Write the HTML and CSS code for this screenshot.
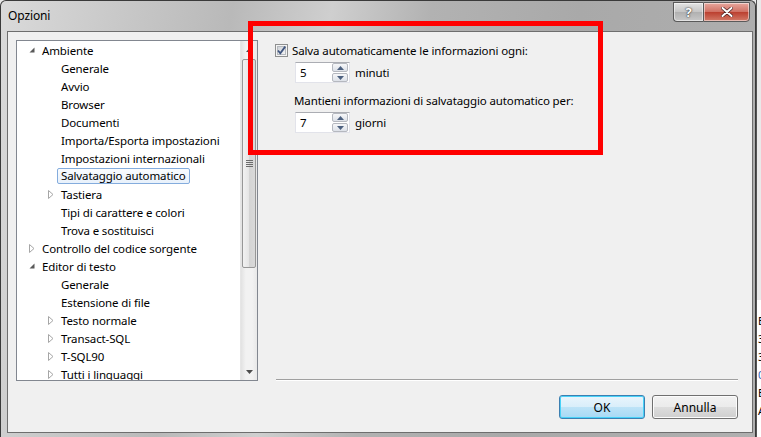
FILE: index.html
```html
<!DOCTYPE html>
<html lang="it">
<head>
    <meta charset="UTF-8">
    <title>Opzioni</title>
    <link rel="stylesheet" href="styles.css">
</head>
<body>

<div class="window">
    <!-- Barra del titolo -->
    <div class="titlebar">
        <span class="title">Opzioni</span>
        <div class="caption-btns">
            <div class="cap-btn help">?</div>
            <div class="cap-btn close">
                <svg width="12" height="10" viewBox="0 0 12 10"><path d="M1.5 1 L10.5 9 M10.5 1 L1.5 9" stroke="#4a2020" stroke-width="3.4" stroke-linecap="round"/><path d="M1.5 1 L10.5 9 M10.5 1 L1.5 9" stroke="#fff" stroke-width="2" stroke-linecap="round"/></svg>
            </div>
        </div>
    </div>

    <div class="client">
        <div class="main">
            <!-- Albero delle categorie -->
            <div class="tree">
                <div class="tree-items">
                    <div class="row lvl0"><span class="exp"><svg width="6" height="6"><path d="M5.5 0.5 L5.5 5.5 L0.5 5.5 Z" fill="#595959"/></svg></span>Ambiente</div>
                    <div class="row lvl1"><span class="exp"></span>Generale</div>
                    <div class="row lvl1"><span class="exp"></span>Avvio</div>
                    <div class="row lvl1"><span class="exp"></span>Browser</div>
                    <div class="row lvl1"><span class="exp"></span>Documenti</div>
                    <div class="row lvl1"><span class="exp"></span>Importa/Esporta impostazioni</div>
                    <div class="row lvl1"><span class="exp"></span>Impostazioni internazionali</div>
                    <div class="row lvl1"><span class="exp"></span><span class="selected">Salvataggio automatico</span></div>
                    <div class="row lvl1"><span class="exp"><svg width="6" height="9"><path d="M0.5 0.5 L5 4.5 L0.5 8.5 Z" fill="#fff" stroke="#a6a6a6"/></svg></span>Tastiera</div>
                    <div class="row lvl1"><span class="exp"></span>Tipi di carattere e colori</div>
                    <div class="row lvl1"><span class="exp"></span>Trova e sostituisci</div>
                    <div class="row lvl0"><span class="exp"><svg width="6" height="9"><path d="M0.5 0.5 L5 4.5 L0.5 8.5 Z" fill="#fff" stroke="#a6a6a6"/></svg></span>Controllo del codice sorgente</div>
                    <div class="row lvl0"><span class="exp"><svg width="6" height="6"><path d="M5.5 0.5 L5.5 5.5 L0.5 5.5 Z" fill="#595959"/></svg></span>Editor di testo</div>
                    <div class="row lvl1"><span class="exp"></span>Generale</div>
                    <div class="row lvl1"><span class="exp"></span>Estensione di file</div>
                    <div class="row lvl1"><span class="exp"><svg width="6" height="9"><path d="M0.5 0.5 L5 4.5 L0.5 8.5 Z" fill="#fff" stroke="#a6a6a6"/></svg></span>Testo normale</div>
                    <div class="row lvl1"><span class="exp"><svg width="6" height="9"><path d="M0.5 0.5 L5 4.5 L0.5 8.5 Z" fill="#fff" stroke="#a6a6a6"/></svg></span>Transact-SQL</div>
                    <div class="row lvl1"><span class="exp"><svg width="6" height="9"><path d="M0.5 0.5 L5 4.5 L0.5 8.5 Z" fill="#fff" stroke="#a6a6a6"/></svg></span>T-SQL90</div>
                    <div class="row lvl1"><span class="exp"><svg width="6" height="9"><path d="M0.5 0.5 L5 4.5 L0.5 8.5 Z" fill="#fff" stroke="#a6a6a6"/></svg></span>Tutti i linguaggi</div>
                </div>
                <div class="vscroll">
                    <div class="sb-arrow"><svg width="7" height="4"><path d="M0 4 L3.5 0 L7 4 Z" fill="#4d4d4d"/></svg></div>
                    <div class="sb-gap-top"></div>
                    <div class="sb-thumb">
                        <svg width="7" height="7"><path d="M0 0.5 H7 M0 2.5 H7 M0 4.5 H7 M0 6.5 H7" stroke="#6c6c6c"/></svg>
                    </div>
                    <div class="sb-track"></div>
                    <div class="sb-arrow"><svg width="7" height="4"><path d="M0 0 L3.5 4 L7 0 Z" fill="#4d4d4d"/></svg></div>
                </div>
            </div>

            <!-- Pagina: Salvataggio automatico -->
            <div class="page">
                <div class="opt-row">
                    <svg class="checkbox" width="13" height="13" viewBox="0 0 13 13">
                        <defs><linearGradient id="cb" x1="0" y1="0" x2="1" y2="1"><stop offset="0" stop-color="#cbcfd5"/><stop offset="1" stop-color="#f6f6f6"/></linearGradient></defs>
                        <rect x="0.5" y="0.5" width="12" height="12" fill="#f4f4f4" stroke="#8e8f8f"/>
                        <rect x="2.5" y="2.5" width="8" height="8" fill="url(#cb)" stroke="#b5b9be"/>
                        <path d="M3 6.5 L5.3 9.3 L10.2 2.6" fill="none" stroke="#40557f" stroke-width="1.8"/>
                    </svg>
                    <span>Salva automaticamente le informazioni ogni:</span>
                </div>
                <div class="spin-row">
                    <div class="spinner">
                        <span class="spin-value">5</span>
                        <div class="spin-btns">
                            <div class="spin-btn"><svg width="7" height="4"><path d="M0 4 L3.5 0 L7 4 Z" fill="#4c607f"/></svg></div>
                            <div class="spin-btn"><svg width="7" height="4"><path d="M0 0 L3.5 4 L7 0 Z" fill="#4c607f"/></svg></div>
                        </div>
                    </div>
                    <span>minuti</span>
                </div>
                <div class="opt-row label2">Mantieni informazioni di salvataggio automatico per:</div>
                <div class="spin-row">
                    <div class="spinner">
                        <span class="spin-value">7</span>
                        <div class="spin-btns">
                            <div class="spin-btn"><svg width="7" height="4"><path d="M0 4 L3.5 0 L7 4 Z" fill="#4c607f"/></svg></div>
                            <div class="spin-btn"><svg width="7" height="4"><path d="M0 0 L3.5 4 L7 0 Z" fill="#4c607f"/></svg></div>
                        </div>
                    </div>
                    <span>giorni</span>
                </div>
                <div class="separator"></div>
            </div>
        </div>

        <div class="footer">
            <button class="btn default">OK</button>
            <button class="btn">Annulla</button>
        </div>
    </div>
</div>

<!-- finestra dietro (bordo destro) -->
<div class="behind">
    <span class="frag first">E</span>
    <span class="frag">3</span>
    <span class="frag">3</span>
    <span class="frag blue">0</span>
    <span class="frag">E</span>
    <span class="frag">A</span>
</div>

<!-- riquadro rosso di evidenziazione -->
<div class="highlight"></div>

</body>
</html>
```

FILE: styles.css
```css
* {
    box-sizing: border-box;
}
body {
    margin: 0;
    width: 761px;
    height: 437px;
    overflow: hidden;
    position: relative;
    display: flex;
    font-family: "Noto Sans", "Open Sans", sans-serif;
    font-size: 11.5px;
    letter-spacing: -0.12px;
    color: #000;
    background: #e9e9e9;
}

/* finestra */
.window {
    width: 756px;
    height: 437px;
    flex-shrink: 0;
    border: 1px solid #3a3a3a;
    border-bottom: none;
    border-radius: 6px 6px 0 0;
    background: linear-gradient(100deg, #dadada 0%, #c9c9c9 14%, #b9b9b9 28%, #cfcfcf 40%, #b2b2b2 52%, #a9a9a9 70%, #b0b0b0 100%);
    display: flex;
    flex-direction: column;
}
.titlebar {
    height: 30px;
    display: flex;
    align-items: flex-start;
    padding-left: 7px;
}
.title {
    line-height: 30px;
    font-size: 12px;
    color: #000;
}
.caption-btns {
    margin-left: auto;
    margin-right: 5px;
    margin-top: 1px;
    display: flex;
}
.cap-btn {
    height: 20px;
    display: flex;
    align-items: center;
    justify-content: center;
    border: 1px solid #5a5a5a;
    box-shadow: inset 0 0 0 1px rgba(255,255,255,0.5);
}
.help {
    width: 30px;
    border-radius: 0 0 0 4px;
    border-right: none;
    background: linear-gradient(#e4e4e4, #c4c4c4 50%, #b0b0b0 51%, #c8c8c8);
    color: #fff;
    font-weight: bold;
    font-size: 13px;
    text-shadow: 0 0 2px #333, 0 0 1px #333;
}
.close {
    width: 47px;
    border-radius: 0 0 4px 0;
    background: linear-gradient(#e8a89e, #cf6f62 50%, #bb3f2f 51%, #d37a68);
}

/* area client */
.client {
    margin-left: 6px;
    width: 746px;
    height: 402px;
    border: 1px solid #6e6e6e;
    background: #f0f0f0;
    padding: 8px 14px 0 8px;
}
.main {
    display: flex;
    height: 341px;
}

/* albero */
.tree {
    width: 242px;
    height: 341px;
    border: 1px solid #828790;
    background: #fff;
    display: flex;
}
.tree-items {
    flex: 1;
    overflow: hidden;
}
.row {
    height: 18px;
    display: flex;
    align-items: center;
    white-space: nowrap;
}
.row.lvl0 { padding-left: 9px; }
.row.lvl1 { padding-left: 28px; }
.exp {
    width: 16px;
    flex-shrink: 0;
    display: flex;
    align-items: center;
    padding-left: 3px;
}
.exp svg {
    display: block;
}
.selected {
    line-height: 14px;
    padding: 0 3px;
    margin-left: -4px;
    border: 1px solid #84acdd;
    border-radius: 2px;
    background: linear-gradient(#fafcfe, #e8f1fb);
}

/* barra di scorrimento */
.vscroll {
    width: 17px;
    display: flex;
    flex-direction: column;
    background: linear-gradient(90deg, #e2e2e2, #f2f2f2 30%, #f2f2f2 70%, #e8e8e8);
    border-left: 1px solid #e6e6e6;
}
.sb-arrow {
    height: 17px;
    display: flex;
    align-items: center;
    justify-content: center;
}
.sb-gap-top {
    height: 1px;
}
.sb-thumb {
    height: 209px;
    margin: 0 1px;
    border: 1px solid #979797;
    border-radius: 2px;
    background: linear-gradient(90deg, #f2f2f2, #e5e5e5 50%, #d4d4d4 51%, #d9d9d9);
    display: flex;
    align-items: center;
    justify-content: center;
}
.sb-track {
    flex: 1;
}

/* pagina opzioni */
.page {
    flex: 1;
    display: flex;
    flex-direction: column;
    padding-left: 17px;
    padding-top: 3px;
}
.opt-row {
    height: 15px;
    display: flex;
    align-items: center;
    white-space: nowrap;
}
.checkbox {
    margin-right: 4px;
    flex-shrink: 0;
}
.label2 {
    margin-top: 10px;
    padding-left: 19px;
}
.spin-row {
    margin-top: 4px;
    margin-left: 20px;
    display: flex;
    align-items: center;
    gap: 5px;
}
.spinner {
    width: 55px;
    height: 21px;
    border: 1px solid #e2e3ea;
    border-top-color: #abadb3;
    background: #fff;
    display: flex;
    align-items: center;
}
.spin-value {
    flex: 1;
    padding-left: 4px;
}
.spin-btns {
    width: 16px;
    height: 19px;
    display: flex;
    flex-direction: column;
    gap: 1px;
    margin-right: 1px;
}
.spin-btn {
    flex: 1;
    border: 1px solid #b5b8bf;
    border-radius: 2px;
    background: linear-gradient(#f6f7f9, #dde1e8);
    display: flex;
    align-items: center;
    justify-content: center;
}
.separator {
    margin-top: auto;
    margin-left: 1px;
    height: 2px;
    border-top: 1px solid #a0a0a0;
    border-bottom: 1px solid #fff;
}

/* pulsanti */
.footer {
    margin-top: 14px;
    display: flex;
    justify-content: flex-end;
    gap: 7px;
}
.btn {
    width: 86px;
    height: 24px;
    font-family: inherit;
    font-size: 12px;
    color: #000;
    border: 1px solid #707070;
    border-radius: 3px;
    background: linear-gradient(#f2f2f2, #ebebeb 50%, #dddddd 51%, #cfcfcf);
    box-shadow: inset 0 0 0 1px #fcfcfc;
    padding: 0;
}
.btn.default {
    border-color: #3c7fb1;
    background: linear-gradient(#e9f5fc, #d9eefa 50%, #bde3f7 51%, #a7d9f5);
    box-shadow: inset 0 0 0 1px #48d2f8;
}

/* finestra dietro */
.behind {
    flex: 1;
    display: flex;
    flex-direction: column;
    font-size: 11px;
    line-height: 18px;
    padding-left: 1px;
    border-left: 1px solid #555;
    background: linear-gradient(#e9e9e9 300px, #fff 300px);
    overflow: hidden;
}
.frag.first {
    margin-top: 312px;
}
.frag.blue {
    color: #2f62b8;
}

/* evidenziazione */
.highlight {
    position: absolute;
    left: 248px;
    top: 21px;
    width: 355px;
    height: 134px;
    border: 5px solid #ff0000;
}
```
